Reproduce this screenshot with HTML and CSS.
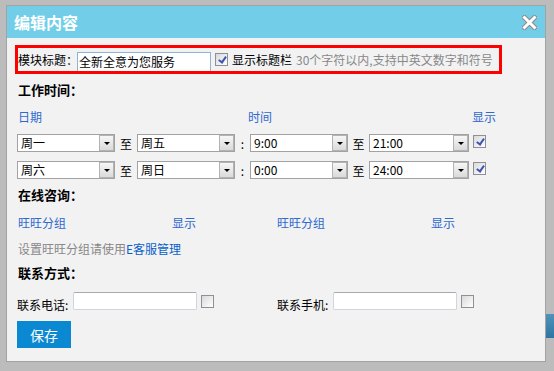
FILE: index.html
```html
<!doctype html>
<html lang="zh-CN">
<head>
    <meta charset="UTF-8">
    <title>编辑内容</title>

    <link rel="stylesheet" href="styles.css">
</head>
<body>

<div class="page-tab"></div>

<div class="dialog">

    <div class="dialog__head">
        <span class="dialog__title">编辑内容</span>
        <span class="dialog__close">
            <svg width="15" height="15" viewBox="0 0 15 15">
                <path d="M2.5 2.5 L12.5 12.5 M12.5 2.5 L2.5 12.5" stroke="#8a8a8a" stroke-width="5" stroke-linecap="square"/>
                <path d="M2.5 2.5 L12.5 12.5 M12.5 2.5 L2.5 12.5" stroke="#fff" stroke-width="3" stroke-linecap="square"/>
            </svg>
        </span>
    </div>

    <div class="dialog__body">

        <div class="title-box">
            <span class="title-box__label">模块标题：</span>
            <input type="text" class="title-box__input" value="全新全意为您服务">
            <span class="check check--on"></span>
            <span class="title-box__show">显示标题栏</span>
            <span class="title-box__tip">30个字符以内,支持中英文数字和符号</span>
        </div>

        <div class="section-title">工作时间：</div>

        <div class="col-head">
            <span class="col-head__date">日期</span>
            <span class="col-head__time">时间</span>
            <span>显示</span>
        </div>

        <div class="time-row">
            <div class="select"><span class="select__text">周一</span><span class="select__btn"></span></div>
            <span class="sep">至</span>
            <div class="select"><span class="select__text">周五</span><span class="select__btn"></span></div>
            <span class="sep sep--colon">:</span>
            <div class="select"><span class="select__text">9:00</span><span class="select__btn"></span></div>
            <span class="sep sep--to">至</span>
            <div class="select select--wide"><span class="select__text">21:00</span><span class="select__btn"></span></div>
            <span class="check check--on"></span>
        </div>

        <div class="time-row time-row--next">
            <div class="select"><span class="select__text">周六</span><span class="select__btn"></span></div>
            <span class="sep">至</span>
            <div class="select"><span class="select__text">周日</span><span class="select__btn"></span></div>
            <span class="sep sep--colon">:</span>
            <div class="select"><span class="select__text">0:00</span><span class="select__btn"></span></div>
            <span class="sep sep--to">至</span>
            <div class="select select--wide"><span class="select__text">24:00</span><span class="select__btn"></span></div>
            <span class="check check--on"></span>
        </div>

        <div class="section-title">在线咨询：</div>

        <div class="ww-head">
            <span class="ww-head__group">旺旺分组</span>
            <span class="ww-head__show">显示</span>
            <span class="ww-head__group2">旺旺分组</span>
            <span>显示</span>
        </div>

        <div class="tip">设置旺旺分组请使用<a href="#" class="tip__link">E客服管理</a></div>

        <div class="section-title section-title--flush">联系方式：</div>

        <div class="contact-row">
            <span class="contact-row__label">联系电话:</span>
            <input type="text" class="contact-row__input">
            <span class="check"></span>
            <span class="contact-row__label contact-row__label--second">联系手机:</span>
            <input type="text" class="contact-row__input">
            <span class="check"></span>
        </div>

        <button class="btn-save">保存</button>

    </div>
</div>

</body>
</html>
```

FILE: styles.css
```css
* {
    margin: 0;
    padding: 0;
    box-sizing: border-box;
}

body {
    position: relative;
    height: 371px;
    overflow: hidden;
    background: #bcbcbc;
    font-family: "Noto Sans CJK SC", sans-serif;
    font-size: 12px;
    color: #000;
}

.page-tab {
    position: absolute;
    left: 546px;
    top: 314px;
    width: 8px;
    height: 24px;
    background: linear-gradient(#4f93ba, #2d76a3);
}

.dialog {
    position: relative;
    width: 540px;
    height: 357px;
    margin: 5px 0 0 6px;
    border: 1px solid #a3a3a3;
    background: #f2f2f2;
}

.dialog__head {
    display: flex;
    align-items: center;
    justify-content: space-between;
    height: 32px;
    padding: 0 8px 0 7px;
    background: #72cee8;
}

.dialog__title {
    color: #fff;
    font-size: 16px;
    font-weight: bold;
}

.dialog__close {
    display: flex;
    margin-top: 1px;
}

.dialog__body {
    padding: 7px 0 0 8px;
}

/* title block */

.title-box {
    display: flex;
    align-items: center;
    width: 487px;
    height: 29px;
    border: 3px solid #f00;
    overflow: hidden;
    white-space: nowrap;
}

.title-box__label {
    flex: none;
}

.title-box__input {
    flex: none;
    width: 134px;
    height: 20px;
    margin-top: 4px;
    margin-left: -1px;
    padding-left: 1px;
    border: 1px solid #8fb2d8;
    font-family: inherit;
    font-size: 12px;
    outline: none;
}

.title-box .check {
    margin-left: 4px;
}

.title-box__show {
    flex: none;
    margin-left: 4px;
}

.title-box__tip {
    flex: none;
    margin-left: 4px;
    color: #888;
}

/* checkbox */

.check {
    position: relative;
    flex: none;
    width: 13px;
    height: 13px;
    border: 1px solid #8f8f95;
    background: linear-gradient(135deg, #d9d9dc, #fff);
}

.check--on::after {
    content: "";
    position: absolute;
    left: 4px;
    top: 1px;
    width: 3px;
    height: 6px;
    border: solid #3f56b0;
    border-width: 0 2px 2px 0;
    transform: rotate(35deg);
}

/* headings and columns */

.section-title {
    height: 20px;
    margin-top: 6px;
    padding-left: 3px;
    line-height: 20px;
    font-size: 13px;
    font-weight: bold;
}

.section-title--flush {
    margin-top: 0;
}

.col-head {
    display: flex;
    height: 22px;
    margin-top: 6px;
    line-height: 22px;
    color: #2f68cf;
}

.col-head__date {
    width: 233px;
    padding-left: 3px;
}

.col-head__time {
    width: 224px;
}

/* time rows */

.time-row {
    display: flex;
    align-items: center;
    height: 18px;
    margin-top: 6px;
    padding-left: 2px;
}

.time-row--next {
    margin-top: 9px;
}

.select {
    display: flex;
    width: 98px;
    height: 18px;
    border: 1px solid #a2a2a2;
    background: #fff;
}

.select--wide {
    width: 100px;
}

.select__text {
    flex: 1;
    padding-left: 3px;
    line-height: 16px;
}

.select__btn {
    display: flex;
    align-items: center;
    justify-content: center;
    width: 15px;
    margin: 0 0 0 1px;
    border: 1px solid #b3b3b3;
    background: linear-gradient(#f6f6f6, #dadada);
}

.select__btn::after {
    content: "";
    border-left: 3px solid transparent;
    border-right: 3px solid transparent;
    border-top: 3px solid #000;
}

.sep {
    width: 22px;
    text-align: center;
}

.sep--colon {
    width: 15px;
}

.sep--to {
    width: 21px;
}

.time-row .check {
    margin-left: 4px;
    margin-top: -3px;
}

/* online consult */

.ww-head {
    display: flex;
    height: 24px;
    margin-top: 6px;
    line-height: 24px;
    color: #2f68cf;
}

.ww-head__group {
    width: 157px;
    padding-left: 3px;
}

.ww-head__show {
    width: 105px;
}

.ww-head__group2 {
    width: 154px;
}

.tip {
    height: 28px;
    padding-left: 3px;
    line-height: 28px;
    color: #888;
}

.tip__link {
    color: #0a60c8;
    text-decoration: none;
}

/* contacts */

.contact-row {
    display: flex;
    align-items: center;
    height: 18px;
    margin-top: 9px;
    padding-left: 2px;
}

.contact-row__label {
    width: 56px;
    padding-top: 6px;
    white-space: nowrap;
}

.contact-row__label--second {
    margin-left: 63px;
}

.contact-row__input {
    width: 124px;
    height: 18px;
    border: 1px solid #d0d4dc;
    border-top-color: #a9a9a9;
    border-radius: 2px;
    background: #fff;
    outline: none;
}

.contact-row .check {
    margin-left: 4px;
}

.btn-save {
    display: block;
    width: 54px;
    height: 27px;
    margin: 11px 0 0 2px;
    border: none;
    background: #0a89d2;
    color: #fff;
    font-family: inherit;
    font-size: 14px;
}
```
